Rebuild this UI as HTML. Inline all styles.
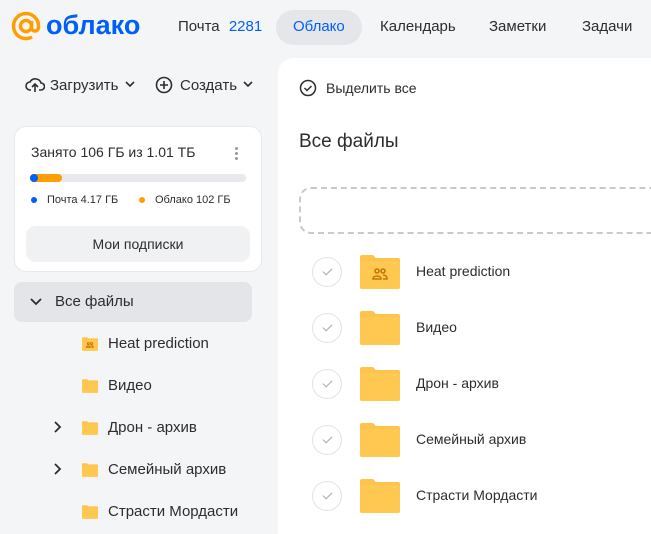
<!DOCTYPE html><html><head><meta charset="utf-8"><style>
html,body{margin:0;width:651px;height:534px;overflow:hidden}
body{background:#f4f5f7;font-family:"Liberation Sans",sans-serif;color:#2c2d2e;position:relative}
.a{position:absolute;white-space:nowrap}
.nav{font-size:15px;top:18px}
.main{position:absolute;left:278px;top:58px;width:400px;height:476px;background:#fff;border-top-left-radius:16px}
.card{position:absolute;left:14px;top:126px;width:248px;height:146px;background:#fff;border-radius:12px;border:1px solid #e8e9ec;box-sizing:border-box}
.chk{position:absolute;left:312px;width:30px;height:30px;border:1px solid #e2e3e6;border-radius:50%;box-sizing:border-box}
.chk:after{content:"";position:absolute;left:10px;top:10px;width:8px;height:4px;border-left:1.5px solid #aaa;border-bottom:1.5px solid #aaa;transform:rotate(-45deg)}
.fold{position:absolute;width:40px;height:34px}
.fn{font-size:14px;left:416px}
.tn{font-size:15px;left:108px}
</style></head><body>
<svg class="a" style="left:10px;top:10px" width="32" height="32" viewBox="0 0 32 32"><circle cx="16" cy="16" r="5.5" fill="none" stroke="#ff9e00" stroke-width="3.5"/><path d="M21.5 11v6.5a3.5 3.5 0 0 0 7 0V16A12.5 12.5 0 1 0 22 27" fill="none" stroke="#ff9e00" stroke-width="3.5"/></svg>
<div class="a" style="left:46px;top:10px;font-size:27px;line-height:30px;font-weight:bold;color:#005ff9">облако</div>
<div class="a nav" style="left:178px">Почта <span style="color:#005ff9;margin-left:5px">2281</span></div>
<div class="a" style="left:276px;top:10px;width:86px;height:35px;border-radius:18px;background:#e4e6ea"></div>
<div class="a nav" style="left:293px;color:#005ff9">Облако</div>
<div class="a nav" style="left:380px">Календарь</div>
<div class="a nav" style="left:489px">Заметки</div>
<div class="a nav" style="left:582px">Задачи</div>
<svg class="a" style="left:25px;top:76px" width="20" height="18" viewBox="0 0 20 18"><path d="M6 14H5a4 4 0 0 1 0-8 6 6 0 0 1 11 1 3.5 3.5 0 0 1 0 7h-2M10 16V8M7 11l3-3 3 3" fill="none" stroke="#2c2d2e" stroke-width="1.6"/></svg>
<div class="a" style="left:50px;top:77px;font-size:15px">Загрузить</div>
<svg class="a" style="left:124px;top:80px" width="12" height="8"><path d="M2 2l4 4 4-4" fill="none" stroke="#2c2d2e" stroke-width="1.6"/></svg>
<svg class="a" style="left:155px;top:76px" width="18" height="18"><circle cx="9" cy="9" r="7.5" fill="none" stroke="#2c2d2e" stroke-width="1.6"/><path d="M9 5v8M5 9h8" stroke="#2c2d2e" stroke-width="1.6"/></svg>
<div class="a" style="left:180px;top:77px;font-size:15px">Создать</div>
<svg class="a" style="left:242px;top:80px" width="12" height="8"><path d="M2 2l4 4 4-4" fill="none" stroke="#2c2d2e" stroke-width="1.6"/></svg>
<div class="card">
<div class="a" style="left:16px;top:17px;font-size:14px">Занято 106 ГБ из 1.01 ТБ</div>
<div class="a" style="left:220px;top:20px;width:3px;height:3px;background:#999;border-radius:50%;box-shadow:0 5px #999,0 10px #999"></div>
<div class="a" style="left:15px;top:47px;width:216px;height:8px;background:#e8e9ec;border-radius:4px"></div>
<div class="a" style="left:15px;top:47px;width:32px;height:8px;background:#ff9e00;border-radius:4px"></div>
<div class="a" style="left:15px;top:47px;width:8px;height:8px;background:#005ff9;border-radius:4px"></div>
<div class="a" style="left:16px;top:70px;width:6px;height:6px;background:#005ff9;border-radius:50%"></div>
<div class="a" style="left:32px;top:67px;font-size:11px">Почта 4.17 ГБ</div>
<div class="a" style="left:124px;top:70px;width:6px;height:6px;background:#ff9e00;border-radius:50%"></div>
<div class="a" style="left:140px;top:67px;font-size:11px">Облако 102 ГБ</div>
<div class="a" style="left:11px;top:99px;width:224px;height:36px;background:#f0f1f3;border-radius:10px;text-align:center;line-height:36px;font-size:14px">Мои подписки</div>
</div>
<div class="a" style="left:14px;top:282px;width:238px;height:40px;background:#e4e5e9;border-radius:8px"></div>
<svg class="a" style="left:29px;top:297px" width="14" height="10"><path d="M2 2l5 5 5-5" fill="none" stroke="#2c2d2e" stroke-width="1.8"/></svg>
<div class="a" style="left:55px;top:293px;font-size:15px">Все файлы</div>
<svg class="a" style="left:53px;top:420px" width="10" height="14"><path d="M2 2l5 5-5 5" fill="none" stroke="#2c2d2e" stroke-width="1.8"/></svg>
<svg class="a" style="left:53px;top:462px" width="10" height="14"><path d="M2 2l5 5-5 5" fill="none" stroke="#2c2d2e" stroke-width="1.8"/></svg>
<svg width="0" height="0" style="position:absolute"><defs><g id="f"><path d="M0 2a2 2 0 0 1 2-2h11l3 3h22a2 2 0 0 1 2 2v27a2 2 0 0 1-2 2H2a2 2 0 0 1-2-2z" fill="#ffc34d"/><rect x="0" y="6" width="40" height="28" rx="2" fill="#ffc850"/></g></defs></svg>
<svg class="a" style="left:82px;top:336px" width="16" height="16" viewBox="0 0 40 34"><use href="#f"/><circle cx="16" cy="16" r="2.5" fill="none" stroke="#c77800" stroke-width="2.5"/><circle cx="24" cy="16" r="2.5" fill="none" stroke="#c77800" stroke-width="2.5"/><path d="M11 25c0-4 10-4 10 0zM23 25h5c0-3-2-4-5-4" fill="none" stroke="#c77800" stroke-width="2.5"/></svg>
<svg class="a" style="left:82px;top:378px" width="16" height="16" viewBox="0 0 40 34"><use href="#f"/></svg>
<svg class="a" style="left:82px;top:420px" width="16" height="16" viewBox="0 0 40 34"><use href="#f"/></svg>
<svg class="a" style="left:82px;top:462px" width="16" height="16" viewBox="0 0 40 34"><use href="#f"/></svg>
<svg class="a" style="left:82px;top:504px" width="16" height="16" viewBox="0 0 40 34"><use href="#f"/></svg>
<div class="a tn" style="top:335px">Heat prediction</div>
<div class="a tn" style="top:377px">Видео</div>
<div class="a tn" style="top:419px">Дрон - архив</div>
<div class="a tn" style="top:461px">Семейный архив</div>
<div class="a tn" style="top:503px">Страсти Мордасти</div>
<div class="main"></div>
<svg class="a" style="left:299px;top:79px" width="18" height="18"><circle cx="9" cy="9" r="7.5" fill="none" stroke="#2c2d2e" stroke-width="1.5"/><path d="M5.5 9l2.5 2.5 4.5-4.5" fill="none" stroke="#2c2d2e" stroke-width="1.5"/></svg>
<div class="a" style="left:326px;top:80px;font-size:14px">Выделить все</div>
<div class="a" style="left:299px;top:131px;font-size:19px">Все файлы</div>
<div class="a" style="left:299px;top:187px;width:400px;height:47px;border:2px dashed #c8c9cc;border-radius:12px;box-sizing:border-box"></div>
<div class="chk" style="top:257px"></div><div class="chk" style="top:313px"></div><div class="chk" style="top:369px"></div><div class="chk" style="top:425px"></div><div class="chk" style="top:481px"></div>
<svg class="fold" style="left:360px;top:255px" viewBox="0 0 40 34"><use href="#f"/><circle cx="17" cy="16" r="2" fill="none" stroke="#c77800" stroke-width="1.6"/><circle cx="23" cy="16" r="2" fill="none" stroke="#c77800" stroke-width="1.6"/><path d="M13 24c0-4 8-4 8 0zM23 24h4c0-3-2-4-4-4" fill="none" stroke="#c77800" stroke-width="1.6"/></svg>
<svg class="fold" style="left:360px;top:311px" viewBox="0 0 40 34"><use href="#f"/></svg>
<svg class="fold" style="left:360px;top:367px" viewBox="0 0 40 34"><use href="#f"/></svg>
<svg class="fold" style="left:360px;top:423px" viewBox="0 0 40 34"><use href="#f"/></svg>
<svg class="fold" style="left:360px;top:479px" viewBox="0 0 40 34"><use href="#f"/></svg>
<div class="a fn" style="top:263px">Heat prediction</div>
<div class="a fn" style="top:319px">Видео</div>
<div class="a fn" style="top:375px">Дрон - архив</div>
<div class="a fn" style="top:431px">Семейный архив</div>
<div class="a fn" style="top:487px">Страсти Мордасти</div>
</body></html>
